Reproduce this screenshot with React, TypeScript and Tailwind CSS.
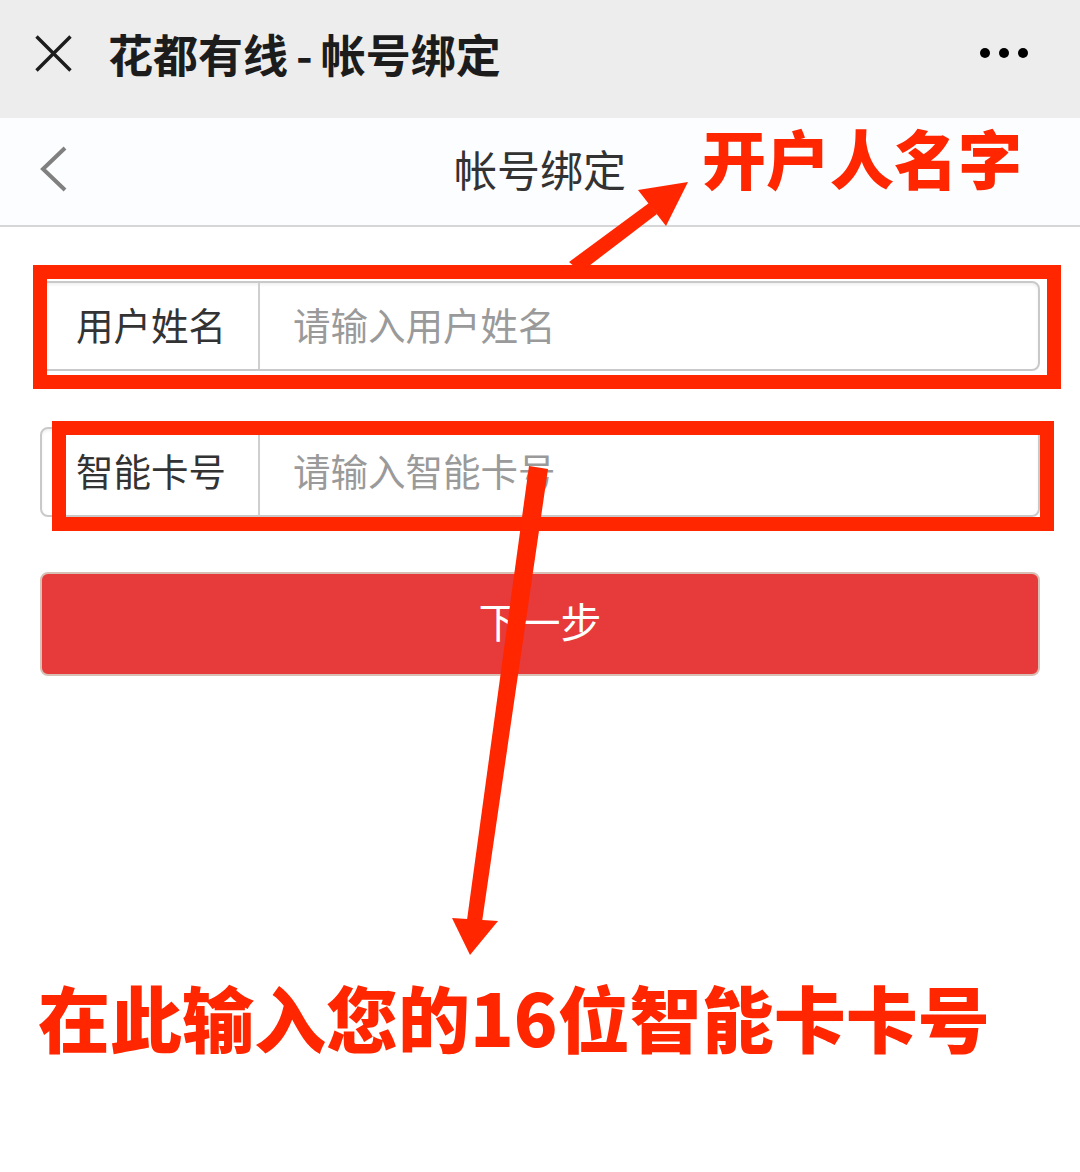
import React from "react";

const RED = "#ff2600";

const Field = ({ label, placeholder }: { label: string; placeholder: string }) => {
  return (
    <div className="flex h-[90px] w-full overflow-hidden rounded-[8px] border-2 border-[#c9c9c9] bg-white shadow-[inset_0_2px_3px_rgba(0,0,0,0.06)]">
      <div className="flex w-[218px] shrink-0 items-center border-r-2 border-[#cfcfcf] pb-[5px] pl-[34px] text-[37.5px] leading-none text-[#333]">
        {label}
      </div>
      <input
        className="min-w-0 flex-1 bg-transparent pb-[5px] pl-[33px] text-[37.5px] leading-none text-[#333] outline-none placeholder:text-[#9a9a9a]"
        placeholder={placeholder}
      />
    </div>
  );
};

const Overlay = () => {
  return (
    <div className="pointer-events-none absolute inset-0">
      <svg width="1080" height="1172" viewBox="0 0 1080 1172" className="absolute left-0 top-0">
        <rect x="40" y="272" width="1014" height="110" fill="none" stroke={RED} strokeWidth="14" />
        <rect x="59" y="428" width="988" height="96" fill="none" stroke={RED} strokeWidth="14" />
        {/* arrow to the name label */}
        <polygon points="569,262 581,272 657,214 649,203" fill={RED} />
        <polygon points="688,182 638,190 666,226" fill={RED} />
        {/* arrow down to the card number hint */}
        <polygon points="529,466 548,469 482,922 467,920" fill={RED} />
        <polygon points="452,918 498,921 470,955" fill={RED} />
      </svg>
      <div className="absolute left-[702px] top-[124px] text-[64px] font-black leading-none text-[#ff2600]">
        开户人名字
      </div>
      <div className="absolute left-[38px] top-[980px] text-[72px] font-black leading-none text-[#ff2600]">
        在此输入您的16位智能卡卡号
      </div>
    </div>
  );
};

export default function App() {
  return (
    <div
      className="relative h-[1172px] w-[1080px] overflow-hidden bg-white"
      style={{ fontFamily: '"Noto Sans CJK SC", "Noto Sans", sans-serif' }}
    >
      {/* wechat title bar */}
      <div className="flex h-[118px] items-center bg-[#ededed] pb-[12px] pl-[35px] pr-[52px]">
        <svg width="37" height="37" viewBox="0 0 37 37" className="shrink-0">
          <path d="M1.5 1.5 L35.5 35.5 M35.5 1.5 L1.5 35.5" stroke="#1c1c1c" strokeWidth="3.4" />
        </svg>
        <div className="ml-[36px] flex-1 text-[45px] font-bold leading-none text-[#1c1c1c]">
          花都有线<span className="px-[8px]">-</span>帐号绑定
        </div>
        <div className="flex items-center gap-[9px]">
          <span className="block h-[10px] w-[10px] rounded-full bg-black" />
          <span className="block h-[10px] w-[10px] rounded-full bg-black" />
          <span className="block h-[10px] w-[10px] rounded-full bg-black" />
        </div>
      </div>

      {/* page nav */}
      <div className="grid h-[109px] grid-cols-[1fr_auto_1fr] items-center border-b-2 border-[#d6d6d6] bg-[#fcfdfe] pb-[6px]">
        <div className="pl-[40px]">
          <svg width="28" height="46" viewBox="0 0 28 46">
            <path d="M25 2 L3 23 L25 44" fill="none" stroke="#808080" strokeWidth="4" />
          </svg>
        </div>
        <div className="text-[43px] leading-none text-[#333]">帐号绑定</div>
        <div />
      </div>

      {/* form */}
      <div className="flex flex-col px-[40px] pt-[54px]">
        <Field label="用户姓名" placeholder="请输入用户姓名" />
        <div className="mt-[56px]">
          <Field label="智能卡号" placeholder="请输入智能卡号" />
        </div>
        <button className="mt-[55px] flex h-[104px] w-full items-center justify-center rounded-[8px] border-2 border-[#d8c0b6] bg-[#e63a3b] pb-[8px] text-[41px] leading-none text-white">
          下一步
        </button>
      </div>

      <Overlay />
    </div>
  );
}
